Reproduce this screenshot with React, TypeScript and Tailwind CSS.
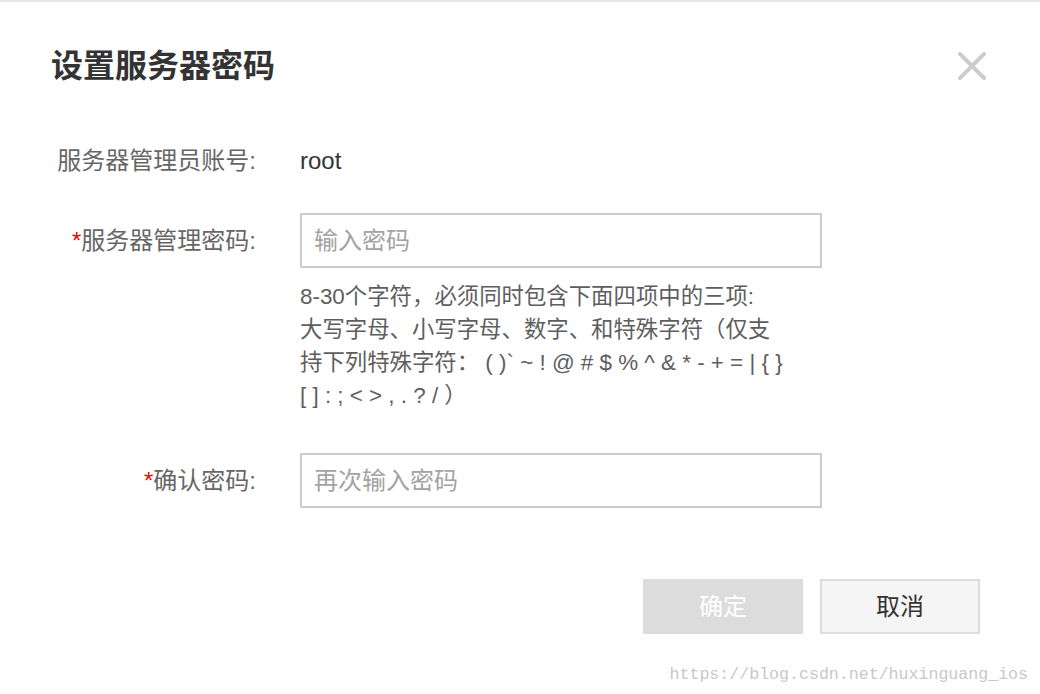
import React from 'react';

const font = { fontFamily: '"Liberation Sans", "Noto Sans CJK SC", sans-serif' };

const Label: React.FC<{ text: string; required?: boolean }> = ({ text, required }) => (
  <div className="w-[204px] shrink-0 text-right text-[24px] leading-[32px] text-[#666]">
    {required && <span className="text-[#f00]">*</span>}
    {text}:
  </div>
);

const PasswordInput: React.FC<{ placeholder: string }> = ({ placeholder }) => (
  <input
    type="password"
    placeholder={placeholder}
    className="w-[522px] h-[55px] border-2 border-[#cccccc] bg-white px-[12px] text-[24px] text-[#333] outline-none placeholder:text-[#a3a3a3]"
    style={font}
  />
);

const App: React.FC = () => {
  return (
    <div className="w-[1040px] h-[694px] bg-white border-t-2 border-[#e8e8e8] flex flex-col" style={font}>
      <div className="pt-[46px] pl-[51px] pr-[54px] flex items-center justify-between">
        <h2 className="text-[32px] leading-[36px] font-bold text-[#333]">设置服务器密码</h2>
        <svg width="28" height="28" viewBox="0 0 28 28" className="text-[#cccccc]">
          <path d="M2 2 L26 26 M26 2 L2 26" stroke="currentColor" strokeWidth="4" strokeLinecap="square" />
        </svg>
      </div>

      <div className="pl-[52px] mt-[61px] flex items-center gap-[44px]">
        <Label text="服务器管理员账号" />
        <span className="text-[24px] leading-[32px] text-[#333]">root</span>
      </div>

      <div className="pl-[52px] mt-[36px] flex items-center gap-[44px]">
        <Label text="服务器管理密码" required />
        <PasswordInput placeholder="输入密码" />
      </div>

      <div className="pl-[300px] mt-[12px] text-[22.4px] leading-[33px] text-[#5e5e5e]">
        <div>8-30个字符，必须同时包含下面四项中的三项:</div>
        <div>大写字母、小写字母、数字、和特殊字符（仅支</div>
        <div>持下列特殊字符： ( )` ~ ! @ # $ % ^ &amp; * - + = | {'{'} {'}'}</div>
        <div>[ ] : ; &lt; &gt; , . ? / ）</div>
      </div>

      <div className="pl-[52px] mt-[41px] flex items-center gap-[44px]">
        <Label text="确认密码" required />
        <PasswordInput placeholder="再次输入密码" />
      </div>

      <div className="mt-[71px] pr-[60px] flex justify-end gap-[17px]">
        <button className="w-[160px] h-[55px] bg-[#dcdcdc] text-white text-[24px]">确定</button>
        <button className="w-[160px] h-[55px] bg-[#f5f5f5] border-2 border-[#dddddd] text-[#333] text-[24px]">取消</button>
      </div>

      <div
        className="mt-[31px] pr-[12px] text-right text-[16.6px] leading-[20px] text-[#c8c8c8]"
        style={{ fontFamily: '"Liberation Mono", monospace' }}
      >
        https://blog.csdn.net/huxinguang_ios
      </div>
    </div>
  );
};

export default App;
